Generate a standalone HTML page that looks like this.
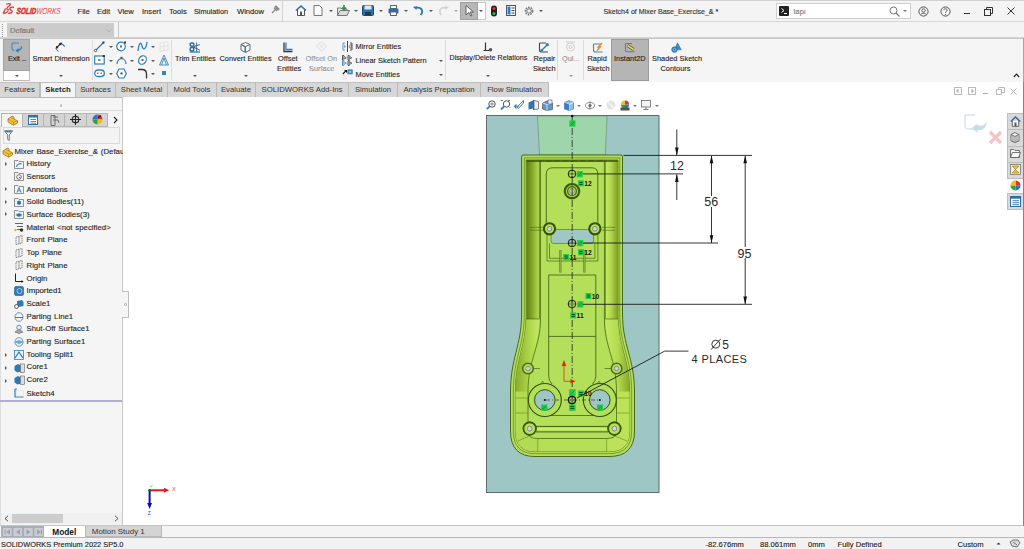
<!DOCTYPE html>
<html><head><meta charset="utf-8">
<style>
*{margin:0;padding:0;box-sizing:border-box}
html,body{width:1024px;height:549px;overflow:hidden;background:#fff;font-family:"Liberation Sans",sans-serif;color:#222}
.a{position:absolute}
.t{position:absolute;font-size:7.4px;line-height:9px;white-space:nowrap;color:#1e1e1e;-webkit-text-stroke:0.12px #1e1e1e}
.dd{position:absolute;width:0;height:0;border-left:2px solid transparent;border-right:2px solid transparent;border-top:2px solid #555}
svg{position:absolute;overflow:visible}
</style></head><body>
<!-- ========== TITLE BAR ========== -->
<div class="a" style="left:0;top:0;width:1024px;height:22px;background:#f4f4f4;border-top:1px solid #d0d0d0;border-bottom:1px solid #d6d6d6"></div>
<div id="titlebar">
<!-- logo -->
<svg style="left:0;top:0" width="16" height="17" viewBox="0 0 16 17">
<path d="M6.6 4 C8 3.6 9.6 3.4 10.6 4 C10.2 5.2 8.8 6.4 7.2 7.6" fill="none" stroke="#e03c3c" stroke-width="1.3" stroke-linecap="round"/>
<path d="M3.2 13.6 L5.2 9 C6.6 8.6 8.4 8.8 8.2 10.2 C7.8 12 5.6 13.4 3.2 13.6" fill="none" stroke="#e03c3c" stroke-width="1.3" stroke-linejoin="round"/>
<path d="M13.4 7.2 C11.6 7 9.6 7.6 9.8 8.8 C10 10 12.6 10.4 12.2 11.8 C11.8 13 10.2 13.4 8.6 13.2" fill="none" stroke="#e03c3c" stroke-width="1.4" stroke-linecap="round"/>
</svg>
<div class="a" style="left:16px;top:5.5px;font-size:8.8px;line-height:10px;font-weight:bold;font-style:italic;color:#dc3030;white-space:nowrap;transform:scaleX(0.735) skewX(-8deg);transform-origin:0 100%"><span style="-webkit-text-stroke:0.5px #dc3030">SOLID</span><span style="font-weight:normal;color:#e04848">WORKS</span></div>
<div class="t" style="left:77.5px;top:6.5px;font-size:7.6px">File</div>
<div class="t" style="left:97px;top:6.5px;font-size:7.6px">Edit</div>
<div class="t" style="left:117.5px;top:6.5px;font-size:7.6px">View</div>
<div class="t" style="left:142px;top:6.5px;font-size:7.6px">Insert</div>
<div class="t" style="left:169px;top:6.5px;font-size:7.6px">Tools</div>
<div class="t" style="left:194px;top:6.5px;font-size:7.3px">Simulation</div>
<div class="t" style="left:237px;top:6.5px;font-size:7.6px">Window</div>
<!-- pin -->
<svg style="left:271px;top:5px" width="9" height="9" viewBox="0 0 9 9"><path d="M1 8 L4 5 M3 3 L6 6 M4 2 L7 5 L8 4 L5 1 Z" stroke="#888" stroke-width="1.2" fill="#999"/></svg>
<div class="a" style="left:282px;top:1px;width:1px;height:20px;background:#d4d4d4"></div>
<!-- home -->
<svg style="left:295px;top:5px" width="12" height="11" viewBox="0 0 12 11"><path d="M1 5.5 L6 1 L11 5.5" fill="none" stroke="#2e6da4" stroke-width="1.6"/><path d="M2.5 5 V10.5 H9.5 V5" fill="#fff" stroke="#555" stroke-width="1"/><rect x="5" y="6.5" width="2" height="4" fill="#555"/></svg>
<!-- new -->
<svg style="left:313px;top:5px" width="10" height="11" viewBox="0 0 10 11"><path d="M1 0.5 H6.5 L9 3 V10.5 H1 Z" fill="#fbfbfb" stroke="#777" stroke-width="1"/></svg>
<div class="dd" style="left:329px;top:10px"></div>
<!-- open -->
<svg style="left:337px;top:5px" width="13" height="11" viewBox="0 0 13 11"><path d="M0.5 3 H4 L5 4 H10 V10.5 H0.5 Z" fill="#eee" stroke="#777"/><path d="M0.5 10.5 L3 5.5 H12.5 L10 10.5Z" fill="#ddd" stroke="#777"/><path d="M7 0 V4 M5 2.5 L7 4.5 L9 2.5" stroke="#2a9a2a" stroke-width="1.6" fill="none"/></svg>
<div class="dd" style="left:354px;top:10px"></div>
<!-- save -->
<svg style="left:362px;top:5px" width="12" height="11" viewBox="0 0 12 11"><rect x="0.5" y="0.5" width="11" height="10" rx="1" fill="#2f6fa8" stroke="#1e4f7c"/><rect x="2.5" y="0.5" width="7" height="4" fill="#dfe8f0"/><rect x="3" y="7" width="6" height="3.5" fill="#1b3d5e"/></svg>
<div class="dd" style="left:379px;top:10px"></div>
<!-- print -->
<svg style="left:388px;top:5px" width="11" height="11" viewBox="0 0 11 11"><rect x="2.5" y="0.5" width="6" height="3" fill="#fff" stroke="#666"/><rect x="0.5" y="3.5" width="10" height="5" rx="1" fill="#2f6fa8"/><rect x="2.5" y="7" width="6" height="3.5" fill="#fff" stroke="#666"/></svg>
<div class="dd" style="left:404px;top:10px"></div>
<!-- undo -->
<svg style="left:413px;top:6px" width="11" height="10" viewBox="0 0 11 10"><path d="M2 2 C7 0.5 10 3 9 7 L7.5 9" fill="none" stroke="#2f78b8" stroke-width="1.8"/><path d="M0 1 L4 0 L3.5 4 Z" fill="#2f78b8"/></svg>
<div class="dd" style="left:429px;top:10px"></div>
<!-- redo grayed -->
<svg style="left:438px;top:6px" width="11" height="10" viewBox="0 0 11 10"><path d="M9 2 C4 0.5 1 3 2 7 L3.5 9" fill="none" stroke="#d4d4d4" stroke-width="1.8"/><path d="M11 1 L7 0 L7.5 4 Z" fill="#d4d4d4"/></svg>
<div class="dd" style="left:454px;top:10px;border-top-color:#aaa"></div>
<!-- select -->
<div class="a" style="left:460px;top:2px;width:26px;height:18px;background:#fff;border:1px solid #c8c8c8"></div>
<div class="a" style="left:460px;top:2px;width:18px;height:18px;background:#b7b7b7;border:1px solid #9f9f9f"></div>
<svg style="left:465px;top:5px" width="9" height="12" viewBox="0 0 9 12"><path d="M1 0.5 V10 L3.5 7.5 L6 11 L7 10.5 L5 7 H8.5 Z" fill="#fff" stroke="#555" stroke-width="0.9"/></svg>
<div class="dd" style="left:479px;top:10px"></div>
<!-- traffic light -->
<svg style="left:490px;top:5px" width="8" height="12" viewBox="0 0 8 12"><rect x="1" y="0.5" width="6" height="11" rx="3" fill="#222"/><circle cx="4" cy="3.5" r="1.5" fill="#e33"/><circle cx="4" cy="8.5" r="1.5" fill="#3b3"/></svg>
<!-- options sheet -->
<svg style="left:506px;top:5px" width="10" height="11" viewBox="0 0 10 11"><rect x="0.5" y="0.5" width="9" height="10" fill="#fff" stroke="#556"/><rect x="1.5" y="1.5" width="3" height="8" fill="#2f7cc0"/><path d="M5.5 3 H8.5 M5.5 5.5 H8.5 M5.5 8 H8.5" stroke="#444"/></svg>
<!-- gear -->
<svg style="left:524px;top:6px" width="10" height="10" viewBox="0 0 10 10"><circle cx="5" cy="5" r="3.6" fill="none" stroke="#777" stroke-width="1.6" stroke-dasharray="1.6 1"/><circle cx="5" cy="5" r="2.2" fill="none" stroke="#777" stroke-width="1"/></svg>
<div class="dd" style="left:539px;top:10px"></div>
<!-- title -->
<div class="t" style="left:603.5px;top:6.5px;font-size:7.05px;color:#333">Sketch4 of Mixer Base_Exercise_&amp; *</div>
<!-- search -->
<div class="a" style="left:776px;top:3px;width:135px;height:16px;background:#fff;border:1px solid #cfcfcf"></div>
<div class="a" style="left:779px;top:6px;width:10px;height:10px;background:#222;border-radius:1px"></div>
<svg style="left:780px;top:7px" width="8" height="8" viewBox="0 0 8 8"><path d="M1.5 1.5 L4 3.5 L1.5 5.5 M4 6.5 H7" stroke="#fff" stroke-width="1" fill="none"/></svg>
<div class="t" style="left:793.5px;top:6.5px;color:#999;font-size:7.4px">tapı</div>
<svg style="left:889px;top:6px" width="11" height="11" viewBox="0 0 11 11"><circle cx="4.5" cy="4.5" r="3.5" fill="none" stroke="#777" stroke-width="1"/><path d="M7 7 L10.5 10.5" stroke="#777" stroke-width="1.2"/></svg>
<div class="dd" style="left:903px;top:10px;border-top-color:#777"></div>
<svg style="left:918px;top:6px" width="11" height="11" viewBox="0 0 11 11"><circle cx="5.5" cy="5.5" r="4.6" fill="none" stroke="#555" stroke-width="1"/><circle cx="5.5" cy="4.5" r="1.7" fill="none" stroke="#555" stroke-width="0.9"/><path d="M2.8 8.5 C3.5 6.8 7.5 6.8 8.2 8.5" fill="none" stroke="#555" stroke-width="0.9"/></svg>
<svg style="left:939.5px;top:6px" width="11" height="11" viewBox="0 0 11 11"><circle cx="5.5" cy="5.5" r="4.6" fill="none" stroke="#555" stroke-width="1"/><path d="M3.8 4.2 C3.8 2.2 7.4 2.2 7.2 4.2 C7 5.5 5.5 5.5 5.5 7" fill="none" stroke="#555" stroke-width="0.9"/><circle cx="5.5" cy="8.5" r="0.6" fill="#555"/></svg>
<div class="a" style="left:964px;top:13px;width:6px;height:1px;background:#333"></div>
<svg style="left:984px;top:7px" width="9" height="9" viewBox="0 0 9 9"><rect x="0.5" y="2.5" width="6" height="6" fill="none" stroke="#333"/><path d="M2.5 2.5 V0.5 H8.5 V6.5 H6.5" fill="none" stroke="#333"/></svg>
<svg style="left:1007px;top:7px" width="8" height="8" viewBox="0 0 8 8"><path d="M0.5 0.5 L7.5 7.5 M7.5 0.5 L0.5 7.5" stroke="#333" stroke-width="1"/></svg>
</div>
<!-- ========== CONFIG ROW ========== -->
<div class="a" style="left:0;top:22px;width:1024px;height:16px;background:#f4f4f4;border-bottom:1px solid #d4d4d4"></div>
<div id="configrow">
<div class="a" style="left:2px;top:24px;width:1px;height:13px;border-left:1px dotted #999"></div>
<div class="a" style="left:7px;top:23px;width:107px;height:13.5px;background:#cbcbcb"></div>
<div class="t" style="left:10px;top:26px;color:#8a8a8a;font-size:7.6px">Default</div>
<svg style="left:105.5px;top:28.5px" width="6" height="4" viewBox="0 0 6 4"><path d="M0.5 0.5 L3 3 L5.5 0.5" fill="none" stroke="#aaa" stroke-width="0.8"/></svg>
<div class="a" style="left:118px;top:21.5px;width:1px;height:17px;background:#c4c4c4"></div>
</div>
<!-- ========== COMMAND MANAGER ========== -->
<div class="a" style="left:0;top:38px;width:1024px;height:45px;background:#f5f5f5;border-top:1px solid #c8c8c8;border-bottom:1px solid #bdbdbd"></div>
<div id="cmdmgr">
<!-- exit sketch -->
<div class="a" style="left:3px;top:39px;width:27px;height:42px;background:#fff;border:1px solid #bdbdbd"></div>
<div class="a" style="left:3px;top:39px;width:27px;height:32px;background:#b5b5b5;border:1px solid #a3a3a3"></div>
<svg style="left:10px;top:41px" width="14" height="13" viewBox="0 0 14 13"><path d="M2 2 H9 M2 2 V7 Q2 9.5 4.5 9.5" fill="none" stroke="#3a8ac8" stroke-width="1.1"/><path d="M11.5 5.5 Q11.5 9 7 9.5" fill="none" stroke="#2f7fc0" stroke-width="1.3"/><path d="M5.5 9.5 L8.5 7 L8.5 12 Z" fill="#2f7fc0"/></svg>
<div class="t" style="left:8px;top:53.5px;letter-spacing:-0.15px">Exit <span style="letter-spacing:-0.6px">...</span></div>
<div class="dd" style="left:14.5px;top:74.5px"></div>
<!-- smart dimension -->
<svg style="left:54px;top:41px" width="13" height="12" viewBox="0 0 13 12"><path d="M4.5 10.5 L1.8 7.5 M7 2 L10.8 5.5" fill="none" stroke="#2f7fc0" stroke-width="1.1"/><path d="M2.5 6.8 L6.8 2.5" stroke="#222" stroke-width="1.1"/><path d="M1.6 7.7 L2.2 4.8 L4.5 7.1 Z M7.7 1.6 L4.8 2.2 L7.1 4.5 Z" fill="#222"/></svg>
<div class="t" style="left:32.5px;top:53.5px;font-size:7.45px">Smart Dimension</div>
<div class="dd" style="left:58.5px;top:74.5px"></div>
<div class="a" style="left:92px;top:40px;width:1px;height:40px;background:#dcdcdc"></div>
<!-- sketch grid icons -->
<svg style="left:94px;top:41px" width="11" height="11" viewBox="0 0 11 11"><path d="M1.5 9.5 L9.5 1.5" stroke="#2f7fc0" stroke-width="1.2"/><circle cx="1.5" cy="9.5" r="1.2" fill="#fff" stroke="#333" stroke-width="0.8"/><rect x="8.5" y="0.5" width="2" height="2" fill="#333"/></svg>
<div class="dd" style="left:109px;top:46px"></div>
<svg style="left:94px;top:55px" width="11" height="10" viewBox="0 0 11 10"><rect x="0.7" y="1" width="9.5" height="8" fill="#fff" stroke="#2f7fc0" stroke-width="1.2"/><rect x="4" y="4" width="2.5" height="2" fill="#888"/><rect x="8.8" y="0" width="2" height="2" fill="#333"/></svg>
<div class="dd" style="left:109px;top:60px"></div>
<svg style="left:94px;top:69px" width="11" height="9" viewBox="0 0 11 9"><rect x="0.7" y="1" width="9.6" height="6.5" rx="3.2" fill="#fff" stroke="#2f7fc0" stroke-width="1.3"/><rect x="3" y="3.5" width="1.5" height="1.5" fill="#777"/><rect x="6.5" y="3.5" width="1.5" height="1.5" fill="#777"/></svg>
<div class="dd" style="left:109px;top:73px"></div>
<svg style="left:116px;top:41px" width="11" height="11" viewBox="0 0 11 11"><circle cx="5" cy="5.5" r="4.3" fill="#fff" stroke="#2f7fc0" stroke-width="1.2"/><rect x="4" y="4.5" width="2" height="2" fill="#666"/><rect x="8" y="0.5" width="2" height="2" fill="#444"/></svg>
<div class="dd" style="left:130px;top:46px"></div>
<svg style="left:116px;top:55px" width="11" height="10" viewBox="0 0 11 10"><path d="M1 9 C1 2 10 2 10 9" fill="none" stroke="#2f7fc0" stroke-width="1.2"/><rect x="4.5" y="1.8" width="2" height="2" fill="#444"/></svg>
<div class="dd" style="left:130px;top:60px"></div>
<svg style="left:116px;top:68px" width="11" height="11" viewBox="0 0 11 11"><path d="M3 1 H8 L10.3 5.5 L8 10 H3 L0.7 5.5 Z" fill="#fff" stroke="#2f7fc0" stroke-width="1.2"/><rect x="4.5" y="4.5" width="2" height="2" fill="#444"/></svg>
<svg style="left:137px;top:41px" width="11" height="11" viewBox="0 0 11 11"><path d="M1 10 C2 1 4 0.5 5 5 C6 9.5 9 9 10 1" fill="none" stroke="#2f7fc0" stroke-width="1.3"/></svg>
<div class="dd" style="left:151px;top:46px"></div>
<svg style="left:137px;top:55px" width="11" height="10" viewBox="0 0 11 10"><ellipse cx="5.5" cy="5" rx="3.6" ry="4.5" transform="rotate(35 5.5 5)" fill="#fff" stroke="#2f7fc0" stroke-width="1.2"/><rect x="4.5" y="4" width="2" height="2" fill="#666"/></svg>
<div class="dd" style="left:151px;top:60px"></div>
<svg style="left:137px;top:68px" width="11" height="11" viewBox="0 0 11 11"><path d="M1 1.5 H5 C8 1.5 9.5 3 9.5 6 V10.5" fill="none" stroke="#333" stroke-width="1.3"/></svg>
<div class="dd" style="left:151px;top:73px"></div>
<svg style="left:159px;top:41px" width="10" height="11" viewBox="0 0 10 11"><path d="M1 2 L9 0.5 V9 L1 10.5 Z M1 6 L9 4.5 M5 1 V10" fill="none" stroke="#ddd" stroke-width="0.8"/></svg>
<svg style="left:159px;top:54px" width="10" height="12" viewBox="0 0 10 12"><path d="M0.5 11 L5 1 L9.5 11 M2.5 11 L5 4 L7.5 11 M0.5 11 H9.5" fill="none" stroke="#4a8fc4" stroke-width="1"/></svg>
<div class="a" style="left:162px;top:71px;width:4px;height:4px;background:#3385c0"></div>
<div class="a" style="left:171px;top:40px;width:1px;height:40px;background:#dcdcdc"></div>
<!-- trim -->
<svg style="left:189px;top:42px" width="12" height="11" viewBox="0 0 12 11"><rect x="1.2" y="0.9" width="3.6" height="3.4" rx="1.4" fill="none" stroke="#2a6f9e" stroke-width="1.5"/><rect x="1.2" y="5.6" width="3.6" height="3.4" rx="1.2" fill="none" stroke="#2a6f9e" stroke-width="1.5"/><path d="M7.5 0.3 V10.3" stroke="#4a90c0" stroke-width="1.1"/><path d="M4.8 4.6 L10.8 2.6 M4.8 5.2 L10.8 8.2" stroke="#555" stroke-width="1"/><path d="M0.8 10 H11" stroke="#2a6f9e" stroke-width="1.2"/></svg>
<div class="t" style="left:175px;top:53.5px">Trim Entities</div>
<div class="dd" style="left:192.5px;top:74.5px"></div>
<!-- convert -->
<svg style="left:240px;top:42px" width="11" height="11" viewBox="0 0 11 11"><path d="M5.5 0.5 L10 2.5 V8 L5.5 10.5 L1 8 V2.5 Z" fill="#f8f8f8" stroke="#666"/><path d="M1 2.5 L5.5 4.5 L10 2.5 M5.5 4.5 V10.5" fill="none" stroke="#666"/><path d="M1.5 3 L5 4.8 V10" stroke="#2f7fc0" stroke-width="1" fill="none"/></svg>
<div class="t" style="left:219.5px;top:53.5px">Convert Entities</div>
<div class="dd" style="left:243.5px;top:74.5px"></div>
<!-- offset -->
<svg style="left:283px;top:42px" width="10" height="10" viewBox="0 0 10 10"><path d="M1 0.5 V9.5 H9.5" fill="none" stroke="#333" stroke-width="1.3"/><path d="M3 0.5 V7.5 H9.5" fill="none" stroke="#2f7fc0" stroke-width="1.3"/></svg>
<div class="t" style="left:278px;top:53.5px">Offset</div>
<div class="t" style="left:277px;top:63.5px">Entities</div>
<svg style="left:316px;top:41px" width="11" height="11" viewBox="0 0 11 11"><path d="M5.5 0.5 L10.5 5 L5.5 10.5 L0.5 5 Z" fill="none" stroke="#ddd"/><path d="M3 5 L5.5 2.5 L8 5 L5.5 8 Z" fill="#e8e8e8"/></svg>
<div class="t" style="left:305.5px;top:53.5px;color:#b9b9b9">Offset On</div>
<div class="t" style="left:309px;top:63.5px;color:#b9b9b9">Surface</div>
<!-- mirror / pattern / move -->
<svg style="left:341.5px;top:41px" width="11" height="11" viewBox="0 0 11 11"><path d="M3 2 H1 V9 H3" fill="none" stroke="#5a9ed0" stroke-width="1"/><path d="M1.8 3.3 L4.3 5.5 L1.8 7.7Z" fill="#7ab4dc"/><path d="M5.5 0 V11" stroke="#333" stroke-width="0.9"/><path d="M8 2 H10 V9 H8" fill="none" stroke="#555" stroke-width="1"/><path d="M9.2 3.3 L6.8 5.5 L9.2 7.7Z" fill="none" stroke="#555" stroke-width="0.8"/></svg>
<div class="t" style="left:355.5px;top:42px">Mirror Entities</div>
<svg style="left:341.5px;top:55px" width="11" height="11" viewBox="0 0 11 11"><path d="M2.1 0.5 H0.5 V5.1 H2.1" fill="none" stroke="#444" stroke-width="0.9"/><path d="M1.8 1.4 L4.4 2.8 L1.8 4.2Z" fill="#fff" stroke="#444" stroke-width="0.8"/><path d="M7.6 0.5 H6 V5.1 H7.6" fill="none" stroke="#444" stroke-width="0.9"/><path d="M7.3 1.4 L9.9 2.8 L7.3 4.2Z" fill="#fff" stroke="#444" stroke-width="0.8"/><path d="M2.1 5.8 H0.5 V10.399999999999999 H2.1" fill="none" stroke="#3a86c0" stroke-width="0.9"/><path d="M1.8 6.7 L4.4 8.1 L1.8 9.5Z" fill="#fff" stroke="#3a86c0" stroke-width="0.8"/><path d="M7.6 5.8 H6 V10.399999999999999 H7.6" fill="none" stroke="#444" stroke-width="0.9"/><path d="M7.3 6.7 L9.9 8.1 L7.3 9.5Z" fill="#fff" stroke="#444" stroke-width="0.8"/></svg>
<div class="t" style="left:355.5px;top:56px">Linear Sketch Pattern</div>
<div class="dd" style="left:438.5px;top:60px"></div>
<svg style="left:341.5px;top:68.5px" width="11" height="11" viewBox="0 0 11 11"><path d="M0.8 5 L4.5 1.3" stroke="#111" stroke-width="1.1"/><path d="M2 1 H5 V4Z" fill="#111"/><rect x="5.8" y="0.8" width="4.6" height="4.2" fill="#4a90c0" stroke="#2a6a98" stroke-width="0.5"/><rect x="7.3" y="2.2" width="1.6" height="1.4" fill="#cfe6f4"/><rect x="1" y="6.8" width="3.2" height="3.2" fill="none" stroke="#bbb" stroke-width="0.5" stroke-dasharray="0.8 0.6"/></svg>
<div class="t" style="left:355.5px;top:69.5px">Move Entities</div>
<div class="dd" style="left:438.5px;top:73.5px"></div>
<div class="a" style="left:445px;top:40px;width:1px;height:40px;background:#dcdcdc"></div>
<!-- display/delete relations -->
<svg style="left:483px;top:42px" width="10" height="10" viewBox="0 0 10 10"><path d="M2.5 0.5 V8.5 M0.5 8.5 H6" stroke="#333" stroke-width="1.2"/><circle cx="7.5" cy="7.8" r="1.8" fill="#555"/></svg>
<div class="t" style="left:449.5px;top:53.5px;font-size:7.15px">Display/Delete Relations</div>
<div class="dd" style="left:486px;top:74.5px"></div>
<!-- repair sketch -->
<svg style="left:538px;top:42px" width="12" height="11" viewBox="0 0 12 11"><path d="M1.5 1 H8 M1.5 1 V8.3 Q1.5 10 3.2 10 H10" fill="none" stroke="#444" stroke-width="1.1"/><path d="M4 8 L9 3" stroke="#2f7fb8" stroke-width="1.5"/><circle cx="9.3" cy="2.7" r="1.6" fill="#2f7fb8"/><circle cx="3.8" cy="8.2" r="1.3" fill="#2f7fb8"/></svg>
<div class="t" style="left:533.5px;top:53.5px">Repair</div>
<div class="t" style="left:533px;top:63.5px">Sketch</div>
<div class="a" style="left:557px;top:40px;width:1px;height:40px;background:#dcdcdc"></div>
<svg style="left:565px;top:41px" width="11" height="11" viewBox="0 0 11 11"><circle cx="5.5" cy="6" r="4" fill="none" stroke="#d0d0d0"/><circle cx="5.5" cy="6" r="1.5" fill="none" stroke="#d0d0d0"/><path d="M1 1 H10" stroke="#d0d0d0"/></svg>
<div class="t" style="left:562px;top:53.5px;color:#b9b9b9">Qui...</div>
<div class="dd" style="left:568.5px;top:74.5px;border-top-color:#999"></div>
<div class="a" style="left:583px;top:40px;width:1px;height:40px;background:#dcdcdc"></div>
<!-- rapid sketch -->
<svg style="left:592px;top:41.5px" width="12" height="11" viewBox="0 0 12 11"><path d="M1.5 2 V8 Q1.5 10 3.5 10 H10.5 M1.5 2 H9" fill="none" stroke="#3a86c0" stroke-width="1.1"/><path d="M10 1 L6.2 5 H8.3 L4.8 8.8" fill="none" stroke="#ef8a1a" stroke-width="1.4"/></svg>
<div class="t" style="left:587.5px;top:53.5px">Rapid</div>
<div class="t" style="left:587px;top:63.5px">Sketch</div>
<!-- instant2d -->
<div class="a" style="left:611px;top:39px;width:38px;height:42px;background:#b5b5b5;border:1px solid #9c9c9c"></div>
<svg style="left:624px;top:42px" width="12" height="11" viewBox="0 0 12 11"><path d="M1.5 1.5 V8 Q1.5 9.8 3.3 9.8 H10.5 M1.5 1.5 H8" fill="none" stroke="#3a86c0" stroke-width="1.1"/><path d="M3.5 3.5 L9.5 7.5" stroke="#3a3a2a" stroke-width="3"/><path d="M3.5 3.5 L9.5 7.5" stroke="#f0d040" stroke-width="2"/></svg>
<div class="t" style="left:614px;top:53.5px">Instant2D</div>
<!-- shaded sketch contours -->
<svg style="left:670.5px;top:41.5px" width="11" height="11" viewBox="0 0 11 11"><path d="M6.5 0.8 L10.3 7.8 H3.5 Z" fill="#3b90c8" stroke="#2a70a8" stroke-width="0.6"/><circle cx="3.5" cy="7.6" r="2.8" fill="#3a86c0" stroke="#2a6898" stroke-width="0.6"/><circle cx="3.5" cy="7.6" r="1.2" fill="none" stroke="#9cc8e8" stroke-width="0.6"/></svg>
<div class="t" style="left:652px;top:53.5px">Shaded Sketch</div>
<div class="t" style="left:660.5px;top:63.5px">Contours</div>
<!-- right edge -->
<div class="a" style="left:1022.5px;top:38px;width:1.5px;height:44px;background:#a6a6a6"></div>
<svg style="left:1013px;top:73px" width="7" height="5" viewBox="0 0 7 5"><path d="M0.8 4 L3.5 1.2 L6.2 4" fill="none" stroke="#222" stroke-width="1.2"/></svg>
</div>
<!-- ========== TABS ========== -->
<div class="a" style="left:0;top:82px;width:1024px;height:16px;background:#fff"></div>
<div id="tabs">
<style>
.tb{position:absolute;top:82px;height:16px;background:#d7d7d7;border:1px solid #bababa;border-top:1px solid #c0c0c0;font-size:7.75px;line-height:14px;text-align:center;white-space:nowrap;color:#333}
</style>
<div class="tb" style="left:-1px;width:41px">Features</div>
<div class="tb" style="left:40px;width:36px;background:#f5f5f5;border-bottom:none;font-weight:bold;color:#222">Sketch</div>
<div class="tb" style="left:75px;width:41px">Surfaces</div>
<div class="tb" style="left:115px;width:53px">Sheet Metal</div>
<div class="tb" style="left:167px;width:50px">Mold Tools</div>
<div class="tb" style="left:216px;width:40px">Evaluate</div>
<div class="tb" style="left:255px;width:94px">SOLIDWORKS Add-Ins</div>
<div class="tb" style="left:348px;width:50px">Simulation</div>
<div class="tb" style="left:397px;width:84px">Analysis Preparation</div>
<div class="tb" style="left:480px;width:69px">Flow Simulation</div>
</div>
<!-- ========== FEATURE MANAGER ========== -->
<div class="a" style="left:0;top:97px;width:123px;height:429px;background:#f5f5f5;border-right:1px solid #c9c9c9"></div>
<div id="fm">
<style>
.tr{position:absolute;left:26.5px;font-size:7.8px;word-spacing:0.7px;line-height:9px;white-space:nowrap;color:#1e1e1e;-webkit-text-stroke:0.12px #1e1e1e}
.ex{position:absolute;left:5px;width:0;height:0;border-top:2px solid transparent;border-bottom:2px solid transparent;border-left:2.5px solid #555}
.fmt{position:absolute;top:113px;height:14px;background:#d4d4d4;border:1px solid #b4b4b4}
</style>
<div class="a" style="left:0;top:97px;width:123px;height:1px;background:#b8b8b8"></div>
<div class="a" style="left:59.5px;top:104px;width:2.5px;height:2.5px;border-radius:50%;background:#c4c4c4"></div>
<div class="a" style="left:0;top:110px;width:122px;height:1px;background:#dadada"></div>
<div class="fmt" style="left:1px;width:22px;background:#f5f5f5;border-bottom:none"></div>
<div class="fmt" style="left:22px;width:22px"></div>
<div class="fmt" style="left:43px;width:22px"></div>
<div class="fmt" style="left:64px;width:23px"></div>
<div class="fmt" style="left:86px;width:22px"></div>
<div class="a" style="left:0;top:126px;width:1px;height:400px;background:#dedede"></div>
<!-- fm tab icons -->
<svg style="left:6.5px;top:114px" width="12" height="12" viewBox="0 0 12 12"><path d="M1 5 L4.5 2.5 C5.5 1.8 7 2.3 7 3.5 L7 5 L10.5 6.8 V9 L6.5 11.2 L1 8 Z" fill="#f2c53c" stroke="#8a6a10" stroke-width="0.7"/><path d="M1 5 L6.5 8 L10.5 6.8 M6.5 8 V11.2 M4.2 3.8 L7 5" fill="none" stroke="#a8820e" stroke-width="0.6"/></svg>
<svg style="left:28px;top:114.5px" width="10" height="10" viewBox="0 0 10 10"><rect x="0.5" y="0.5" width="9" height="9" fill="#fff" stroke="#2f6fa8"/><rect x="0.5" y="0.5" width="9" height="2" fill="#2f6fa8"/><path d="M2.5 4.5 H8 M2.5 6.5 H8 M2.5 8.2 H8" stroke="#2f6fa8" stroke-width="0.8"/></svg>
<svg style="left:50px;top:114.5px" width="10" height="11" viewBox="0 0 10 11"><path d="M1 0.5 H5 V10.5 H1 Z" fill="none" stroke="#555" stroke-width="0.8"/><path d="M3 2 H8 M3 5 H8 L9 8" stroke="#555" stroke-width="0.8" fill="none"/></svg>
<svg style="left:70px;top:114px" width="11" height="11" viewBox="0 0 11 11"><circle cx="5.5" cy="5.5" r="3.3" fill="none" stroke="#222" stroke-width="1.1"/><path d="M5.5 0 V11 M0 5.5 H11" stroke="#222" stroke-width="1.1"/></svg>
<svg style="left:92px;top:114px" width="11" height="11" viewBox="0 0 11 11"><path d="M5.5 5.5 L5.5 0.5 A5 5 0 0 1 10.5 5.5 Z" fill="#e03030"/><path d="M5.5 5.5 L10.5 5.5 A5 5 0 0 1 5.5 10.5 Z" fill="#f0c020"/><path d="M5.5 5.5 L5.5 10.5 A5 5 0 0 1 0.5 5.5 Z" fill="#30a040"/><path d="M5.5 5.5 L0.5 5.5 A5 5 0 0 1 5.5 0.5 Z" fill="#3070d0"/><path d="M6 4 L9 1.5" stroke="#222" stroke-width="1.3"/></svg>
<svg style="left:113px;top:116px" width="5" height="8" viewBox="0 0 5 8"><path d="M1 1 L4 4 L1 7" fill="none" stroke="#222" stroke-width="1.1"/></svg>
<!-- filter -->
<div class="a" style="left:2.5px;top:127px;width:117px;height:17px;background:#f3f3f3;border:1px solid #dadada"></div>
<svg style="left:4px;top:130px" width="9" height="11" viewBox="0 0 9 11"><path d="M0.5 0.8 H8.5 L5.3 5 V10.3 L3.7 9.5 V5 Z" fill="#fff" stroke="#555" stroke-width="0.8"/><path d="M0.5 0.8 H8.5 L7 2.6 H2 Z" fill="#2f86c8"/></svg>
<!-- root -->
<svg style="left:2px;top:145.5px" width="12" height="12" viewBox="0 0 12 12"><path d="M1 5 L4.5 2.5 C5.5 1.8 7 2.3 7 3.5 L7 5 L10.5 6.8 V9 L6.5 11.2 L1 8 Z" fill="#f2c53c" stroke="#8a6a10" stroke-width="0.7"/><path d="M1 5 L6.5 8 L10.5 6.8 M6.5 8 V11.2 M4.2 3.8 L7 5" fill="none" stroke="#a8820e" stroke-width="0.6"/></svg>
<div class="tr" style="left:14.5px;top:146.5px">Mixer Base_Exercise_&amp; (Default</div>
<!-- rows -->
<div class="ex" style="top:161.7px"></div>
<svg style="left:14px;top:158.5px" width="10" height="10" viewBox="0 0 10 10"><path d="M0.5 1.5 H4 L5 2.5 H9.5 V9.5 H0.5 Z" fill="#f4f4f4" stroke="#777" stroke-width="0.8"/><path d="M2.5 8 C3 5 6 4 7.5 5" fill="none" stroke="#2f7fc0" stroke-width="1.1"/></svg>
<div class="tr" style="top:159.2px">History</div>
<svg style="left:14px;top:171.2px" width="10" height="10" viewBox="0 0 10 10"><path d="M0.5 1.5 H4 L5 2.5 H9.5 V9.5 H0.5 Z" fill="#f4f4f4" stroke="#777" stroke-width="0.8"/><circle cx="5" cy="6" r="2.3" fill="#fff" stroke="#555" stroke-width="0.8"/><path d="M5 6 L6.5 7" stroke="#d03020" stroke-width="1"/></svg>
<div class="tr" style="top:171.9px">Sensors</div>
<div class="ex" style="top:187px"></div>
<svg style="left:14px;top:184px" width="10" height="10" viewBox="0 0 10 10"><path d="M0.5 1.5 H4 L5 2.5 H9.5 V9.5 H0.5 Z" fill="#f4f4f4" stroke="#777" stroke-width="0.8"/><path d="M3 8.5 L5 3.5 L7 8.5 M3.8 6.8 H6.2" fill="none" stroke="#2f7fc0" stroke-width="0.9"/></svg>
<div class="tr" style="top:184.6px">Annotations</div>
<div class="ex" style="top:199.7px"></div>
<svg style="left:14px;top:196.7px" width="10" height="10" viewBox="0 0 10 10"><path d="M0.5 1.5 H4 L5 2.5 H9.5 V9.5 H0.5 Z" fill="#f4f4f4" stroke="#777" stroke-width="0.8"/><path d="M3 4.5 L5 3.5 L7 4.5 V7 L5 8 L3 7 Z" fill="#2f78b0"/></svg>
<div class="tr" style="top:197.3px">Solid Bodies(11)</div>
<div class="ex" style="top:212.4px"></div>
<svg style="left:14px;top:209.4px" width="10" height="10" viewBox="0 0 10 10"><path d="M0.5 1.5 H4 L5 2.5 H9.5 V9.5 H0.5 Z" fill="#f4f4f4" stroke="#777" stroke-width="0.8"/><ellipse cx="5" cy="6" rx="2.8" ry="1.8" fill="#2f78b0"/></svg>
<div class="tr" style="top:210px">Surface Bodies(3)</div>
<svg style="left:14px;top:222px" width="10" height="10" viewBox="0 0 10 10"><path d="M1 1.5 H9 M3 4.5 H9 M3 7.5 H6" stroke="#555" stroke-width="0.9"/><circle cx="1.5" cy="8" r="1.2" fill="#e8b020"/><circle cx="7.5" cy="8" r="1.8" fill="#333"/></svg>
<div class="tr" style="top:222.7px">Material &lt;not specified&gt;</div>
<svg style="left:15px;top:235px" width="8" height="10" viewBox="0 0 8 10"><path d="M1 2 L7 0.5 V8 L1 9.5 Z" fill="none" stroke="#555" stroke-width="0.7" stroke-dasharray="1.5 0.6"/><path d="M4 1.5 V8.5" stroke="#555" stroke-width="0.6"/></svg>
<div class="tr" style="top:235.4px">Front Plane</div>
<svg style="left:15px;top:247.7px" width="8" height="10" viewBox="0 0 8 10"><path d="M1 2 L7 0.5 V8 L1 9.5 Z" fill="none" stroke="#555" stroke-width="0.7" stroke-dasharray="1.5 0.6"/><path d="M4 1.5 V8.5" stroke="#555" stroke-width="0.6"/></svg>
<div class="tr" style="top:248.1px">Top Plane</div>
<svg style="left:15px;top:260.4px" width="8" height="10" viewBox="0 0 8 10"><path d="M1 2 L7 0.5 V8 L1 9.5 Z" fill="none" stroke="#555" stroke-width="0.7" stroke-dasharray="1.5 0.6"/><path d="M4 1.5 V8.5" stroke="#555" stroke-width="0.6"/></svg>
<div class="tr" style="top:260.8px">Right Plane</div>
<svg style="left:14px;top:273px" width="10" height="10" viewBox="0 0 10 10"><path d="M1.5 0.5 V8.5 H9" fill="none" stroke="#222" stroke-width="1"/><path d="M7.5 7 L9.5 8.5 L7.5 10" fill="#222"/></svg>
<div class="tr" style="top:273.5px">Origin</div>
<svg style="left:14px;top:286px" width="10" height="10" viewBox="0 0 10 10"><rect x="0.5" y="0.5" width="9" height="9" rx="1.5" fill="#2f7ab8" stroke="#1e5a8a" stroke-width="0.6"/><circle cx="5.5" cy="5" r="2.5" fill="none" stroke="#bde" stroke-width="0.8"/></svg>
<div class="tr" style="top:286.2px">Imported1</div>
<svg style="left:14px;top:298.5px" width="10" height="10" viewBox="0 0 10 10"><path d="M3 2 L8 1 L9.5 3 V7 L4 8 L3 6 Z" fill="#2f7ab8"/><circle cx="2.5" cy="7.5" r="2" fill="#eee" stroke="#444" stroke-width="0.8"/></svg>
<div class="tr" style="top:298.9px">Scale1</div>
<svg style="left:14px;top:311.5px" width="10" height="10" viewBox="0 0 10 10"><ellipse cx="5" cy="5" rx="4" ry="4.3" fill="#f4f4f4" stroke="#3a80b8" stroke-width="0.8"/><path d="M1 5.5 H9" stroke="#3a80b8" stroke-width="1"/></svg>
<div class="tr" style="top:311.6px">Parting Line1</div>
<svg style="left:14px;top:324px" width="10" height="10" viewBox="0 0 10 10"><path d="M1 8 L5 5 L9 8 L5 9.5 Z" fill="#aaa" stroke="#555" stroke-width="0.6"/><circle cx="5" cy="3.5" r="2.3" fill="#eee" stroke="#3a80b8" stroke-width="0.8"/></svg>
<div class="tr" style="top:324.3px">Shut-Off Surface1</div>
<svg style="left:14px;top:337px" width="10" height="10" viewBox="0 0 10 10"><ellipse cx="5" cy="5" rx="4" ry="4.3" fill="#f4f4f4" stroke="#3a80b8" stroke-width="0.8"/><path d="M0 5 L5 3 L10 5 L5 7 Z" fill="#6aa8d8"/></svg>
<div class="tr" style="top:337px">Parting Surface1</div>
<div class="ex" style="top:353.2px"></div>
<svg style="left:14px;top:350px" width="10" height="10" viewBox="0 0 10 10"><rect x="0.5" y="0.5" width="9" height="9" fill="#e8f0f8" stroke="#3a80b8" stroke-width="0.8"/><path d="M1 8 L5 2 L9 8" fill="none" stroke="#2f7ab8" stroke-width="1.2"/></svg>
<div class="tr" style="top:349.7px">Tooling Split1</div>
<div class="ex" style="top:365.9px"></div>
<svg style="left:14px;top:362.5px" width="11" height="10" viewBox="0 0 11 10"><path d="M0.5 3 L4 1 L7 2.5 V8.5 L3.5 9.5 L0.5 7.5 Z" fill="#2f78b0"/><rect x="6.5" y="1" width="4" height="8.5" fill="#ddd" stroke="#666" stroke-width="0.6"/></svg>
<div class="tr" style="top:362.4px">Core1</div>
<div class="ex" style="top:378.6px"></div>
<svg style="left:14px;top:375.2px" width="11" height="10" viewBox="0 0 11 10"><path d="M0.5 3 L4 1 L7 2.5 V8.5 L3.5 9.5 L0.5 7.5 Z" fill="#2f78b0"/><rect x="6.5" y="1" width="4" height="8.5" fill="#ddd" stroke="#666" stroke-width="0.6"/></svg>
<div class="tr" style="top:375.1px">Core2</div>
<svg style="left:14px;top:388px" width="10" height="10" viewBox="0 0 10 10"><path d="M1 1 V9 H9.5" fill="none" stroke="#2f7fc0" stroke-width="1.2"/><path d="M1 1 H3" stroke="#2f7fc0" stroke-width="1.2"/><rect x="2.5" y="2.5" width="7" height="5.5" fill="none" stroke="#ddd" stroke-width="0.5"/></svg>
<div class="tr" style="top:388.5px">Sketch4</div>
<div class="a" style="left:0;top:400px;width:122px;height:2px;background:#aeaed6"></div>
<!-- handle -->
<div class="a" style="left:122px;top:291px;width:7px;height:27px;background:#f5f5f5;border:1px solid #bdbdbd;border-left:none;z-index:5"></div>
<div class="a" style="left:123.5px;top:302.5px;width:3.5px;height:3.5px;border-radius:50%;border:1px solid #aaa;z-index:6"></div>
<!-- scrollbar -->
<div class="a" style="left:1px;top:513px;width:121px;height:11px;background:#f0f0f0"></div>
<div class="a" style="left:12px;top:513.5px;width:51px;height:9.5px;background:#cdcdcd"></div>
<svg style="left:4px;top:515px" width="5" height="7" viewBox="0 0 5 7"><path d="M4 0.8 L1 3.5 L4 6.2" fill="none" stroke="#555" stroke-width="1"/></svg>
<svg style="left:114px;top:515px" width="5" height="7" viewBox="0 0 5 7"><path d="M1 0.8 L4 3.5 L1 6.2" fill="none" stroke="#555" stroke-width="1"/></svg>
</div>
<!-- ========== GRAPHICS ========== -->
<div class="a" style="left:123px;top:97px;width:901px;height:429px;background:#fff"></div><div class="a" style="left:1022.5px;top:82px;width:1.5px;height:444px;background:#5b8ad6;z-index:3"></div>
<div id="gfx">
<svg style="left:0;top:0" width="1024" height="549" viewBox="0 0 1024 549">
<defs>
<linearGradient id="wl" x1="0" x2="1" y1="0" y2="0"><stop offset="0" stop-color="#5f7d14"/><stop offset="0.35" stop-color="#7e9e22"/><stop offset="0.8" stop-color="#a6cc44"/><stop offset="1" stop-color="#b6de58"/></linearGradient>
<linearGradient id="wr" x1="0" x2="1" y1="0" y2="0"><stop offset="0" stop-color="#c6ec66"/><stop offset="0.45" stop-color="#b0d84c"/><stop offset="1" stop-color="#7c9c20"/></linearGradient>
<linearGradient id="wlt" x1="0" x2="1" y1="0" y2="0"><stop offset="0" stop-color="#8aaa2a"/><stop offset="0.6" stop-color="#b0d84a"/><stop offset="1" stop-color="#c4e866"/></linearGradient>
<linearGradient id="wrt" x1="0" x2="1" y1="0" y2="0"><stop offset="0" stop-color="#c4ea64"/><stop offset="0.5" stop-color="#b4dc50"/><stop offset="1" stop-color="#88a82a"/></linearGradient>
</defs>
<!-- teal block -->
<rect x="486.5" y="115.5" width="172.5" height="377" fill="#9dc6c4" stroke="#5a6e6c" stroke-width="1"/>
<path d="M537.5 116 H607 L605.3 155 H539.5 Z" fill="#9fd5aa" stroke="#5f8a68" stroke-width="0.6"/>
<path d="M523 155 H621 Q622.5 155 622.5 157 V314 C622.5 346 634.5 358 634.5 392 V431 Q634.5 456.5 609 456.5 H535 Q510.5 456.5 510.5 431 V392 C510.5 358 521.6 346 521.6 314 V157 Q521.6 155 523 155 Z" fill="#b4e05c" stroke="#3e5c0a" stroke-width="0.9"/>
<path d="M524.3 157.8 H619.8 V314 C619.8 346 631.7 358 631.7 392 V431 Q631.7 453.7 609 453.7 H535 Q513.3 453.7 513.3 431 V392 C513.3 358 524.3 346 524.3 314 Z" fill="none" stroke="#4a6a10" stroke-width="0.6"/>
<path d="M526.2 160 H618 V316 C618 347 629.6 359 629.6 392 V431 Q629.6 451.6 609 451.6 H535 Q515.4 451.6 515.4 431 V392 C515.4 359 526.2 347 526.2 316 Z" fill="#b0da50" stroke="#3c5a08" stroke-width="0.7"/>
<rect x="526.5" y="160.5" width="13" height="158.5" fill="url(#wl)"/>
<rect x="605.4" y="160.5" width="12.6" height="158.5" fill="url(#wr)"/>
<path d="M526.2 316 V319 H539.4 C539.4 347 528 359 528 392 H515.4 C515.4 359 526.2 347 526.2 316 Z" fill="url(#wlt)"/>
<path d="M618 316 V319 H605.4 C605.4 347 617 359 617 392 H629.6 C629.6 359 618 347 618 316 Z" fill="url(#wrt)"/>
<path d="M515.4 391.5 H528 V432 Q528 438.5 537.8 438.5 V451.6 H535 Q515.4 451.6 515.4 431 Z" fill="#b2da52"/>
<path d="M629.6 391.5 H617 V432 Q617 438.5 606.7 438.5 V451.6 H609 Q629.6 451.6 629.6 431 Z" fill="#bce25a"/>
<path d="M537.8 438.5 H606.7 V451.6 H537.8 Z" fill="#b6de56"/>
<path d="M540.5 161 H604.4 V319 C604.4 347 616.5 359 616.5 392 V432 Q616.5 438.5 606.7 438.5 H537.8 Q528 438.5 528 432 V392 C528 359 540.5 347 540.5 319 Z" fill="#b3df5a" stroke="#3c5a08" stroke-width="0.7"/>
<path d="M539.4 161 V319 M605.4 161 V319 M526.2 319 H539.4 M605.4 319 H618" stroke="#3c5a08" stroke-width="0.6"/>
<path d="M515.5 398 H528 M515.5 413 H528 M629.5 398 H617 M629.5 413 H617 M537.8 438.5 V451.6 M606.7 438.5 V451.6 M518 441 L529 436 M627 441 L615 436" stroke="#5a7a14" stroke-width="0.5"/>
<path d="M526.5 161 H617.8" stroke="#34500a" stroke-width="1.4"/><path d="M543 160.9 H604" stroke="#6a8a2a" stroke-width="0.6" stroke-dasharray="3 5.5"/>
<path d="M546.3 229 V174 Q546.3 167.8 552.5 167.8 H591.8 Q597.8 167.8 597.8 174 V229" fill="none" stroke="#34520a" stroke-width="0.8"/>
<path d="M551 229.5 H593.6 V241 Q593.6 243.4 591 243.4 H553.5 Q551 243.4 551 241 Z" fill="#9fc8c4" stroke="#34520a" stroke-width="0.5"/>
<path d="M547 229 V261 H597.9 V229 M549.5 243.5 V258.3 H594.9 V243.5" fill="none" stroke="#34520a" stroke-width="0.6"/>
<path d="M530 227.3 H543 M530 230.3 H543 M602 227.3 H615 M602 230.3 H615" stroke="#3c5a08" stroke-width="0.5"/>
<path d="M560.4 250 V272.5 M584.4 250 V272.5" stroke="#3c5a10" stroke-width="1.8"/>
<path d="M560.4 250 V272.5 M584.4 250 V272.5" stroke="#b8e060" stroke-width="0.7"/>
<path d="M548.7 275 V376 Q548.7 381 552 384 M595.8 275 V376 Q595.8 381 592.5 384 M548.7 275 H595.8 M548.7 336.4 H595.8" fill="none" stroke="#34520a" stroke-width="0.75"/>
<g stroke="#34520a">
<circle cx="572" cy="191.2" r="7.2" fill="#b3df5a" stroke="#3e5a10" stroke-width="2.2"/>
<circle cx="572" cy="191.2" r="4.4" fill="#b3df5a" stroke="#4a6a18" stroke-width="1.4"/>
<circle cx="572" cy="191.2" r="2.4" fill="#c4c4d8" stroke="#555" stroke-width="0.4"/>
<circle cx="549.5" cy="228.8" r="5.6" fill="#b3df5a" stroke="#34520a" stroke-width="2.1"/>
<circle cx="549.5" cy="228.8" r="2.3" fill="#d2d2ea" stroke="#444" stroke-width="0.5"/>
<circle cx="594.9" cy="228.8" r="5.6" fill="#b3df5a" stroke="#34520a" stroke-width="2.1"/>
<circle cx="594.9" cy="228.8" r="2.3" fill="#d2d2ea" stroke="#444" stroke-width="0.5"/>
<circle cx="528" cy="368.5" r="5.3" fill="#b3df5a" stroke="#4a6a16" stroke-width="1.5"/>
<circle cx="528" cy="368.5" r="2.2" fill="#d2d2ea" stroke="#444" stroke-width="0.5"/>
<circle cx="616.6" cy="368.5" r="5.3" fill="#b3df5a" stroke="#4a6a16" stroke-width="1.5"/>
<circle cx="616.6" cy="368.5" r="2.2" fill="#d2d2ea" stroke="#444" stroke-width="0.5"/>
<circle cx="529.7" cy="428.6" r="6.2" fill="#b8e25e" stroke="#3c5a10" stroke-width="1.7"/>
<circle cx="529.7" cy="428.6" r="2.4" fill="#d2d2ea" stroke="#444" stroke-width="0.5"/>
<circle cx="614.4" cy="428.6" r="6.2" fill="#b8e25e" stroke="#3c5a10" stroke-width="1.7"/>
<circle cx="614.4" cy="428.6" r="2.4" fill="#d2d2ea" stroke="#444" stroke-width="0.5"/>
<path d="M548 415.5 H596" stroke-width="0.7"/>
<circle cx="544.8" cy="400" r="16.5" fill="#b3df5a" stroke-width="1.1"/>
<circle cx="544.8" cy="400" r="10.3" fill="#9fc6c6" stroke-width="1"/>
<circle cx="599.8" cy="400" r="16.5" fill="#b3df5a" stroke-width="1.1"/>
<circle cx="599.8" cy="400" r="10.3" fill="#9fc6c6" stroke-width="1"/>
<path d="M536 426.4 H608 M536 431.9 H608" stroke-width="0.9"/>
<path d="M537 429.1 H607" stroke="#c8ee72" stroke-width="1.8"/>
</g>
<circle cx="529.7" cy="428.6" r="6.2" fill="#b8e25e" stroke="#3c5a10" stroke-width="1.7"/>
<circle cx="529.7" cy="428.6" r="2.4" fill="#d2d2ea" stroke="#444" stroke-width="0.5"/>
<circle cx="614.4" cy="428.6" r="6.2" fill="#b8e25e" stroke="#3c5a10" stroke-width="1.7"/>
<circle cx="614.4" cy="428.6" r="2.4" fill="#d2d2ea" stroke="#444" stroke-width="0.5"/>
<path d="M541 383.5 L542.5 381 L544 383.5 M597.5 383.5 L599 381 L600.5 383.5" fill="none" stroke="#4a6a16" stroke-width="0.6"/>
<path d="M533.5 368.5 H540 M611 368.5 H604.5" stroke="#4a6a16" stroke-width="0.7"/>
<path d="M572.2 116 V412" stroke="#1a1a1a" stroke-width="0.75" stroke-dasharray="7 2 1 2"/>
<circle cx="572.2" cy="116" r="1.3" fill="#111"/>
<path d="M546 400 H599" stroke="#333" stroke-width="0.7" stroke-dasharray="4 2 1 2"/>
<circle cx="544.8" cy="400" r="1.1" fill="#111"/><circle cx="599.8" cy="400" r="1.1" fill="#111"/>
<g fill="none" stroke="#111" stroke-width="0.95">
<circle cx="572" cy="173.9" r="3.8"/><path d="M568.4 173.9 H575.6 M572 170.3 V177.5" stroke-width="0.5"/>
<circle cx="572" cy="243" r="3.8"/><path d="M568.4 243 H575.6 M572 239.4 V246.6" stroke-width="0.5"/>
<circle cx="572" cy="304" r="3.8"/><path d="M568.4 304 H575.6 M572 300.4 V307.6" stroke-width="0.5"/>
<circle cx="572" cy="400" r="3.8"/><path d="M568.4 400 H575.6 M572 396.4 V403.6" stroke-width="0.5"/>
</g>
<rect x="569.3" y="120.4" width="6.2" height="6.3" fill="#1fd24a"/>
<path d="M570.5 125.5 L574.3 121.60000000000001" stroke="#2a6a3a" stroke-width="0.6"/><circle cx="572.4" cy="123.55000000000001" r="1.7" fill="none" stroke="#3a7a4a" stroke-width="0.5"/>
<rect x="576.7" y="171" width="6.2" height="6.3" fill="#1fd24a"/>
<path d="M577.9000000000001 176.10000000000002 L581.7 172.2" stroke="#2a6a3a" stroke-width="0.6"/><circle cx="579.8000000000001" cy="174.15" r="1.7" fill="none" stroke="#3a7a4a" stroke-width="0.5"/>
<rect x="578" y="180.3" width="5.9" height="6.1" fill="#1fd24a"/>
<path d="M579.2 182.35000000000002 H582.6999999999999 M579.2 184.35000000000002 H582.6999999999999" stroke="#0d3a14" stroke-width="0.9"/>
<text x="584.3" y="186.1" font-family="Liberation Sans" font-size="6.6px" font-weight="bold" fill="#111">12</text>
<rect x="577" y="240" width="6.2" height="6.3" fill="#1fd24a"/>
<path d="M578.2 245.10000000000002 L582.0 241.2" stroke="#2a6a3a" stroke-width="0.6"/><circle cx="580.1" cy="243.15" r="1.7" fill="none" stroke="#3a7a4a" stroke-width="0.5"/>
<rect x="578" y="249.2" width="5.9" height="6.1" fill="#1fd24a"/>
<path d="M579.2 251.25 H582.6999999999999 M579.2 253.25 H582.6999999999999" stroke="#0d3a14" stroke-width="0.9"/>
<text x="584.3" y="254.99999999999997" font-family="Liberation Sans" font-size="6.6px" font-weight="bold" fill="#111">12</text>
<rect x="563.2" y="254" width="5.9" height="6.1" fill="#1fd24a"/>
<path d="M564.4000000000001 256.05 H567.9 M564.4000000000001 258.05 H567.9" stroke="#0d3a14" stroke-width="0.9"/>
<text x="569.5" y="259.8" font-family="Liberation Sans" font-size="6.6px" font-weight="bold" fill="#111">11</text>
<rect x="585.5" y="293" width="5.9" height="6.1" fill="#1fd24a"/>
<path d="M586.7 295.05 H590.1999999999999 M586.7 297.05 H590.1999999999999" stroke="#0d3a14" stroke-width="0.9"/>
<text x="591.8" y="298.8" font-family="Liberation Sans" font-size="6.6px" font-weight="bold" fill="#111">10</text>
<rect x="577.2" y="301.2" width="6.2" height="6.3" fill="#1fd24a"/>
<path d="M578.4000000000001 306.3 L582.2 302.4" stroke="#2a6a3a" stroke-width="0.6"/><circle cx="580.3000000000001" cy="304.34999999999997" r="1.7" fill="none" stroke="#3a7a4a" stroke-width="0.5"/>
<rect x="570.3" y="312.4" width="5.9" height="6.1" fill="#1fd24a"/>
<path d="M571.5 314.45 H574.9999999999999 M571.5 316.45 H574.9999999999999" stroke="#0d3a14" stroke-width="0.9"/>
<text x="576.5999999999999" y="318.2" font-family="Liberation Sans" font-size="6.6px" font-weight="bold" fill="#111">11</text>
<rect x="569" y="389.3" width="6.6" height="6.8" fill="#1fd24a"/><rect x="569" y="404.3" width="6.6" height="6.5" fill="#1fd24a"/>
<path d="M570 394.8 L574.6 390.3" stroke="#2a6a3a" stroke-width="0.6"/>
<path d="M570.3 406.6 H574.3 M570.3 408.6 H574.3" stroke="#0d3a14" stroke-width="0.9"/>
<rect x="578" y="390.5" width="5.9" height="6.1" fill="#1fd24a"/>
<path d="M579.2 392.55 H582.6999999999999 M579.2 394.55 H582.6999999999999" stroke="#0d3a14" stroke-width="0.9"/>
<text x="584.3" y="396.3" font-family="Liberation Sans" font-size="6.6px" font-weight="bold" fill="#111">10</text>
<rect x="541.2" y="404.5" width="6.2" height="6.3" fill="#1fd24a"/>
<path d="M542.4000000000001 409.6 L546.2 405.7" stroke="#2a6a3a" stroke-width="0.6"/><circle cx="544.3000000000001" cy="407.65" r="1.7" fill="none" stroke="#3a7a4a" stroke-width="0.5"/>
<rect x="596.9" y="404.5" width="6.2" height="6.3" fill="#1fd24a"/>
<path d="M598.1 409.6 L601.9 405.7" stroke="#2a6a3a" stroke-width="0.6"/><circle cx="600.0" cy="407.65" r="1.7" fill="none" stroke="#3a7a4a" stroke-width="0.5"/>
<g fill="none" stroke="#111" stroke-width="1.1"><circle cx="572" cy="400" r="3.6"/></g>
<path d="M564 381.3 V364 M564 381.3 H571.5" stroke="#e0501c" stroke-width="1"/>
<path d="M561.7 366 L564 360 L566.3 366 Z M570.5 379 L575.5 381.3 L570.5 383.6 Z" fill="#f01c10"/>
<g stroke="#111" stroke-width="0.85" fill="none">
<path d="M623.5 155.4 H752"/>
<path d="M583 173.9 H683"/>
<path d="M583 243 H718"/>
<path d="M583 304.3 H752"/>
<path d="M676.8 129.5 V155 M676.8 174.5 V200"/>
<path d="M711.5 156 V196 M711.5 207 V243"/>
<path d="M745.2 156 V247 M745.2 258 V304"/>
<path d="M688.5 351.1 H664.7 L577 398"/>
</g>
<g fill="#111">
<path d="M675.0 147.6 L676.8 155.4 L678.5999999999999 147.6 Z"/>
<path d="M675.0 181.9 L676.8 174.1 L678.5999999999999 181.9 Z"/>
<path d="M709.7 163.20000000000002 L711.5 155.4 L713.3 163.20000000000002 Z"/>
<path d="M709.7 235.2 L711.5 243 L713.3 235.2 Z"/>
<path d="M743.4000000000001 163.20000000000002 L745.2 155.4 L747.0 163.20000000000002 Z"/>
<path d="M743.4000000000001 296.59999999999997 L745.2 304.4 L747.0 296.59999999999997 Z"/>
</g>
<g font-family="Liberation Sans" font-size="12.5px" fill="#2a2a2a">
<text x="670" y="169.6">12</text>
<text x="704.2" y="206.4">56</text>
<text x="737.6" y="257.5">95</text>
<text x="722.3" y="348.6" font-size="12px">5</text>
<text x="691.5" y="363.2" font-size="11px" letter-spacing="0.4">4 PLACES</text>
</g>
<g fill="none" stroke="#222" stroke-width="0.9"><circle cx="715.8" cy="344.2" r="4"/><path d="M711 349.6 L720.8 338.8"/></g>
<!-- triad -->
<path d="M149.6 490.3 H166" stroke="#e01818" stroke-width="2"/>
<path d="M164 487.8 L169 490.3 L164 492.8 Z" fill="#e01818"/>
<path d="M149.6 490.3 V505" stroke="#0a0ab0" stroke-width="2"/>
<path d="M147.2 503 L149.6 509 L152 503 Z" fill="#0a0ab0"/>
<circle cx="149.6" cy="490.3" r="1.3" fill="#146414"/>
<path d="M150 487 L152.5 485.5" stroke="#3c3" stroke-width="0.8"/>
<text x="172" y="491" font-family="Liberation Sans" font-size="5.5px" fill="#f04040">X</text>
<text x="147.8" y="515" font-family="Liberation Sans" font-size="5px" fill="#3a3af0">Z</text>
</svg>
<!-- view toolbar -->
<div id="vtb">
<svg style="left:486px;top:100px" width="10" height="10" viewBox="0 0 10 10"><circle cx="6" cy="4" r="3.2" fill="#fff" stroke="#555" stroke-width="1"/><path d="M3.8 6.2 L0.8 9.2" stroke="#2f7fc0" stroke-width="1.8"/><path d="M4.5 4 H7.5 M6 2.5 V5.5" stroke="#555" stroke-width="0.7"/></svg>
<svg style="left:500px;top:100px" width="11" height="10" viewBox="0 0 11 10"><circle cx="6.5" cy="4" r="3.2" fill="#fff" stroke="#555" stroke-width="1"/><path d="M4.3 6.2 L1 9.5" stroke="#2f7fc0" stroke-width="1.8"/><path d="M1 1 V0.5 H3 M10 0.5 H8 M10 7 V8" stroke="#555" stroke-width="0.7"/></svg>
<svg style="left:514px;top:100px" width="10" height="10" viewBox="0 0 10 10"><path d="M9.5 0.5 L3 7 L4.5 8.5 L9.5 3 Z" fill="#eee" stroke="#555" stroke-width="0.8"/><path d="M5 6 L0.5 6.5 M2.5 8.5 L0.5 6.5 L2.5 4.5" fill="none" stroke="#2f7fc0" stroke-width="1.1"/></svg>
<svg style="left:527.5px;top:100px" width="11" height="10" viewBox="0 0 11 10"><path d="M0.5 2.5 L5 0.5 V8.5 L0.5 9.5 Z" fill="#2f78b0"/><path d="M6 0.5 L10.5 1.5 V9 L6 9.5 Z" fill="#eee" stroke="#555" stroke-width="0.7"/><path d="M5.5 0 V10" stroke="#333" stroke-width="0.7"/></svg>
<svg style="left:542px;top:99.5px" width="11" height="11" viewBox="0 0 11 11"><path d="M0.5 3 L5 1 L10.5 3 V9.5 L5 10.5 L0.5 9 Z" fill="#5a9ad0" stroke="#555" stroke-width="0.7"/><path d="M5 4.5 V10.5 M0.5 3 L5 4.5 L10.5 3" fill="none" stroke="#fff" stroke-width="0.7"/><rect x="6" y="0" width="4" height="4" fill="#eee" stroke="#555" stroke-width="0.6"/></svg>
<div class="dd" style="left:555.5px;top:104.5px;border-top-color:#777"></div>
<svg style="left:563.5px;top:99.5px" width="10" height="11" viewBox="0 0 10 11"><path d="M0.5 2.5 L5 0.5 L9.5 2.5 V9 L5 10.5 L0.5 9 Z" fill="#8cc0e8" stroke="#4a7aa0" stroke-width="0.7"/><path d="M0.5 2.5 L5 4.5 L9.5 2.5 M5 4.5 V10.5" fill="none" stroke="#fff" stroke-width="0.8"/><path d="M0.5 2.5 V9 L5 10.5 V4.5 Z" fill="#3a80c0"/></svg>
<div class="dd" style="left:576.5px;top:104.5px;border-top-color:#777"></div>
<svg style="left:585px;top:100.5px" width="10" height="9" viewBox="0 0 10 9"><ellipse cx="5" cy="4.5" rx="4.5" ry="3" fill="#fff" stroke="#777" stroke-width="0.8"/><circle cx="5" cy="4.5" r="1.6" fill="#666"/><path d="M5 0 V9" stroke="#777" stroke-width="0.7"/></svg>
<div class="dd" style="left:597.5px;top:104.5px;border-top-color:#777"></div>
<svg style="left:606px;top:100px" width="10" height="10" viewBox="0 0 10 10"><circle cx="5" cy="5" r="4.5" fill="#e4e4e4"/><path d="M2 2 L8 8" stroke="#f4f4f4" stroke-width="1.5"/></svg>
<svg style="left:619.5px;top:99.5px" width="10" height="11" viewBox="0 0 10 11"><path d="M5 4.5 L5 0.5 A4 4 0 0 1 9 4.5 Z" fill="#e03030"/><path d="M5 4.5 L9 4.5 A4 4 0 0 1 5 8.5 Z" fill="#3070d0"/><path d="M5 4.5 L5 8.5 A4 4 0 0 1 1 4.5 Z" fill="#30a040"/><path d="M5 4.5 L1 4.5 A4 4 0 0 1 5 0.5 Z" fill="#f0c020"/><rect x="0.5" y="7.5" width="9" height="3" fill="#555"/></svg>
<div class="dd" style="left:632.5px;top:104.5px;border-top-color:#777"></div>
<svg style="left:641px;top:100px" width="10" height="10" viewBox="0 0 10 10"><rect x="0.5" y="0.5" width="9" height="6.5" fill="#f4f4f4" stroke="#666" stroke-width="0.8"/><path d="M5 7 V9 M2.5 9.5 H7.5" stroke="#666" stroke-width="0.9"/></svg>
<div class="dd" style="left:654.5px;top:104.5px;border-top-color:#777"></div>
</div>
<!-- doc window buttons -->
<svg style="left:954px;top:87px" width="8" height="8" viewBox="0 0 8 8"><rect x="0.5" y="0.5" width="7" height="7" fill="none" stroke="#bbb"/><path d="M4.5 2 L2.5 4 L4.5 6" fill="#aaa" stroke="#aaa" stroke-width="0.6"/></svg>
<svg style="left:968px;top:87px" width="8" height="8" viewBox="0 0 8 8"><rect x="0.5" y="0.5" width="7" height="7" fill="none" stroke="#bbb"/><path d="M3.5 2 L5.5 4 L3.5 6" fill="#aaa" stroke="#aaa" stroke-width="0.6"/></svg>
<div class="a" style="left:983px;top:93px;width:5px;height:1px;background:#aaa"></div>
<svg style="left:996px;top:87px" width="9" height="8" viewBox="0 0 9 8"><rect x="0.5" y="2.5" width="5" height="5" fill="none" stroke="#bbb"/><path d="M2.5 2.5 V0.5 H8.5 V5.5 H5.5" fill="none" stroke="#bbb"/></svg>
<svg style="left:1010px;top:87.5px" width="7" height="7" viewBox="0 0 7 7"><path d="M0.5 0.5 L6.5 6.5 M6.5 0.5 L0.5 6.5" stroke="#aaa" stroke-width="0.9"/></svg>
<!-- confirmation corner -->
<svg style="left:964px;top:114px" width="40" height="32" viewBox="0 0 40 32"><path d="M1 1 H11 M1 1 V12 C1 15 3 15 6 15 H11" fill="none" stroke="#d6e2ea" stroke-width="1.3"/><path d="M12 10 C16 13 20 12 23 8 C22 14 18 17 13 16 L14 19 L8 14 L14 9 Z" fill="#c8dbe8"/><path d="M26 18 L37 29 M37 18 L26 29" stroke="#f2c4c4" stroke-width="3.2"/></svg>
<!-- task pane -->
<div class="a" style="left:1006.5px;top:113px;width:16px;height:97px;background:#d9d9d9;border:1px solid #bdbdbd;border-right:none"></div>
<div class="a" style="left:1007px;top:129px;width:16px;height:1px;background:#bdbdbd"></div>
<div class="a" style="left:1007px;top:145.5px;width:16px;height:1px;background:#bdbdbd"></div>
<div class="a" style="left:1007px;top:161.5px;width:16px;height:1px;background:#bdbdbd"></div>
<div class="a" style="left:1007px;top:177.5px;width:16px;height:16px;background:#fafafa;border-top:1px solid #bdbdbd;border-bottom:1px solid #bdbdbd"></div>
<svg style="left:1009.5px;top:115.5px" width="11" height="11" viewBox="0 0 11 11"><path d="M0.8 5.5 L5.5 1 L10.2 5.5" fill="none" stroke="#2f6da4" stroke-width="1.5"/><path d="M2.3 5 V10.3 H8.7 V5" fill="#fff" stroke="#555" stroke-width="0.9"/><rect x="4.5" y="6.5" width="2" height="3.8" fill="#555"/></svg>
<svg style="left:1010px;top:131.5px" width="10" height="11" viewBox="0 0 10 11"><path d="M1 2.5 L5 0.5 L9 2.5 V9 L5 10.5 L1 9 Z" fill="#f0f0f0" stroke="#555" stroke-width="0.8"/><path d="M1 2.5 L5 4.5 L9 2.5 M5 4.5 V10.5 M3 3.5 V9.8 M7 3.5 V9.8" fill="none" stroke="#555" stroke-width="0.7"/></svg>
<svg style="left:1009.5px;top:148px" width="11" height="10" viewBox="0 0 11 10"><path d="M0.5 1.5 H4 L5 2.5 H9.5 V9.5 H0.5 Z" fill="#f4f4f4" stroke="#555" stroke-width="0.8"/><path d="M0.5 9.5 L2.5 4.5 H10.5 L8.5 9.5 Z" fill="#fafafa" stroke="#555" stroke-width="0.8"/></svg>
<svg style="left:1009.5px;top:164px" width="11" height="11" viewBox="0 0 11 11"><rect x="0.5" y="0.5" width="10" height="10" fill="#eee" stroke="#666" stroke-width="0.7"/><path d="M2 2 H9 L5.5 5.5 L9 9 H2 L5.5 5.5 Z" fill="#f0c020" stroke="#8a6a10" stroke-width="0.5"/></svg>
<svg style="left:1009.5px;top:180px" width="11" height="11" viewBox="0 0 11 11"><path d="M5.5 5.5 L5.5 0.5 A5 5 0 0 1 10.5 5.5 Z" fill="#e03030"/><path d="M5.5 5.5 L10.5 5.5 A5 5 0 0 1 5.5 10.5 Z" fill="#3070d0"/><path d="M5.5 5.5 L5.5 10.5 A5 5 0 0 1 0.5 5.5 Z" fill="#30a040"/><path d="M5.5 5.5 L0.5 5.5 A5 5 0 0 1 5.5 0.5 Z" fill="#f0c020"/></svg>
<svg style="left:1009.5px;top:196px" width="11" height="11" viewBox="0 0 11 11"><rect x="0.5" y="0.5" width="10" height="10" fill="#fff" stroke="#2f6fa8"/><rect x="0.5" y="0.5" width="10" height="2.2" fill="#2f6fa8"/><path d="M2.5 4.7 H9 M2.5 6.7 H9 M2.5 8.7 H9" stroke="#2f6fa8" stroke-width="0.9"/></svg>
</div>
<!-- ========== BOTTOM TABS / STATUS ========== -->
<div class="a" style="left:0;top:525px;width:1024px;height:13px;background:#f4f4f4;border-top:1px solid #c4c4c4;border-bottom:1px solid #b8b8b8"></div>
<div id="btabs">
<div class="a" style="left:1px;top:526px;width:43px;height:11px;background:#aab0bc"></div>
<svg style="left:2px;top:527px" width="42" height="10" viewBox="0 0 42 10"><g fill="#c8ccd4" stroke="#9aa0ac" stroke-width="0.5"><rect x="0.5" y="0.5" width="9.5" height="9"/><rect x="11" y="0.5" width="9.5" height="9"/><rect x="21.5" y="0.5" width="9.5" height="9"/><rect x="32" y="0.5" width="9.5" height="9"/></g><g fill="#9aa0ac"><path d="M3 2.5 V7.5 M8 2.5 L4 5 L8 7.5Z"/><path d="M18 2.5 L14 5 L18 7.5Z"/><path d="M24.5 2.5 L28.5 5 L24.5 7.5Z"/><path d="M35 2.5 L39 5 L35 7.5Z M39.5 2.5 V7.5"/></g><path d="M3 2.5 V7.5 M39.5 2.5 V7.5" stroke="#9aa0ac"/></svg>
<div class="a" style="left:44px;top:526px;width:41px;height:11px;background:#fff"></div>
<div class="a" style="left:52.3px;top:526.8px;font-size:8.3px;line-height:10px;font-weight:bold;color:#111">Model</div>
<div class="a" style="left:84.5px;top:526px;width:77px;height:11px;background:#d4d4d4;border:1px solid #b8b8b8;border-top:none"></div>
<div class="a" style="left:91.8px;top:526.8px;font-size:7.95px;line-height:10px;color:#333;white-space:nowrap">Motion Study 1</div>
</div>
<div class="a" style="left:0;top:538px;width:1024px;height:11px;background:#f2f2f2"></div>
<div id="status">
<div class="t" style="left:1px;top:540px;font-size:7.4px;line-height:9px;color:#222">SOLIDWORKS Premium 2022 SP5.0</div>
<div class="t" style="left:705.5px;top:540px;font-size:7.6px;color:#222">-82.676mm</div>
<div class="t" style="left:760px;top:540px;font-size:7.6px;color:#222">88.061mm</div>
<div class="t" style="left:808px;top:540px;font-size:7.6px;color:#222">0mm</div>
<div class="t" style="left:837.5px;top:540px;font-size:7.6px;color:#222">Fully Defined</div>
<div class="t" style="left:957.5px;top:540px;font-size:7.6px;color:#222">Custom</div>
<svg style="left:995.5px;top:542px" width="5" height="3" viewBox="0 0 5 3"><path d="M0.5 2.5 L2.5 0.5 L4.5 2.5Z" fill="#333"/></svg>
<svg style="left:1009px;top:539px" width="12" height="9" viewBox="0 0 12 9"><path d="M1 3 L4 1 H9 L11 4 L8 8 L3 7 Z" fill="#ddd" stroke="#555" stroke-width="0.8"/><path d="M4 3 L8 6" stroke="#555" stroke-width="0.8"/></svg>
</div>
</body></html>
